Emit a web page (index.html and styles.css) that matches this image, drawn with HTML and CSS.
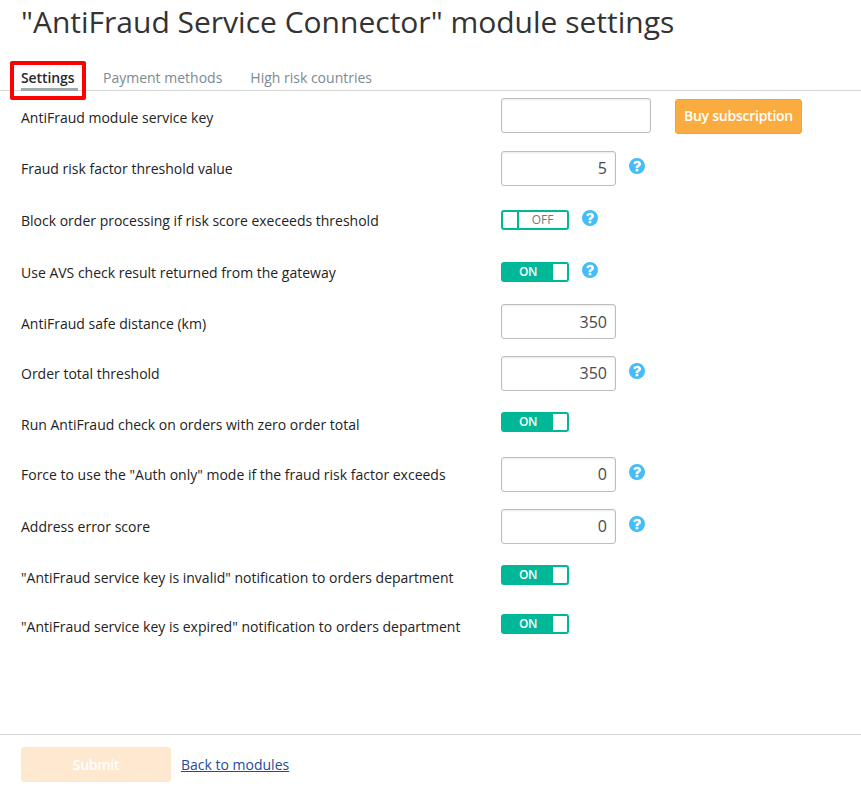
FILE: index.html
```html
<!DOCTYPE html>
<html lang="en">
<head>
<meta charset="utf-8">
<title>"AntiFraud Service Connector" module settings</title>
<link rel="stylesheet" href="styles.css">
</head>
<body>
<svg class="defs" width="0" height="0" aria-hidden="true">
  <symbol id="help" viewBox="0 0 1536 1536">
    <path d="M896 1248v-192q0-14-9-23t-23-9H672q-14 0-23 9t-9 23v192q0 14 9 23t23 9h192q14 0 23-9t9-23zm256-672q0-88-55.500-163T958 297t-170-41q-243 0-371 213-15 24 8 42l132 100q7 6 19 6 16 0 25-12 53-68 86-92 34-24 86-24 48 0 85.500 26t37.500 59q0 38-20 61t-68 45q-63 28-115.500 86.500T640 892v36q0 14 9 23t23 9h192q14 0 23-9t9-23q0-19 21.500-49.500T972 829q32-18 49-28.500t46-35 44.500-48 28-60.500 12.500-81zm384 192q0 209-103 385.500T1153.500 1433 768 1536t-385.500-103T103 1153.500 0 768t103-385.500T382.500 103 768 0t385.500 103T1433 382.500 1536 768z"/>
  </symbol>
</svg>
<h1>"AntiFraud Service Connector" module settings</h1>
<nav class="tabs">
  <a class="tab active">Settings</a>
  <a class="tab">Payment methods</a>
  <a class="tab">High risk countries</a>
</nav>
<form class="settings">
  <div class="row flush">
    <label>AntiFraud module service key</label>
    <input class="field wide" type="text">
    <button class="button buy" type="button">Buy subscription</button>
  </div>
  <div class="row tall">
    <label>Fraud risk factor threshold value</label>
    <input class="field" type="text" value="5">
    <svg class="help"><use href="#help"/></svg>
  </div>
  <div class="row tall">
    <label>Block order processing if risk score execeeds threshold</label>
    <span class="switch off low"><span>OFF</span></span>
    <svg class="help"><use href="#help"/></svg>
  </div>
  <div class="row">
    <label>Use AVS check result returned from the gateway</label>
    <span class="switch on low"><span>ON</span></span>
    <svg class="help"><use href="#help"/></svg>
  </div>
  <div class="row short flush">
    <label>AntiFraud safe distance (km)</label>
    <input class="field" type="text" value="350">
  </div>
  <div class="row">
    <label>Order total threshold</label>
    <input class="field" type="text" value="350">
    <svg class="help"><use href="#help"/></svg>
  </div>
  <div class="row short">
    <label>Run AntiFraud check on orders with zero order total</label>
    <span class="switch on"><span>ON</span></span>
  </div>
  <div class="row tall">
    <label>Force to use the "Auth only" mode if the fraud risk factor exceeds</label>
    <input class="field" type="text" value="0">
    <svg class="help"><use href="#help"/></svg>
  </div>
  <div class="row">
    <label>Address error score</label>
    <input class="field" type="text" value="0">
    <svg class="help"><use href="#help"/></svg>
  </div>
  <div class="row compact">
    <label>"AntiFraud service key is invalid" notification to orders department</label>
    <span class="switch on"><span>ON</span></span>
  </div>
  <div class="row">
    <label>"AntiFraud service key is expired" notification to orders department</label>
    <span class="switch on"><span>ON</span></span>
  </div>
</form>
<footer>
  <button class="button submit" type="button">Submit</button>
  <a class="back">Back to modules</a>
</footer>
</body>
</html>
```
FILE: styles.css
```css
* { box-sizing: border-box; }
body {
  margin: 0;
  height: 797px;
  display: flex;
  flex-direction: column;
  overflow: hidden;
  background: #fff;
  color: #333;
  font: 14px/20px "Open Sans", sans-serif;
}
.defs { position: absolute; }
h1 {
  margin: 0;
  padding-left: 21px;
  height: 61px;
  font-size: 30px;
  font-weight: 400;
  line-height: 44px;
  white-space: nowrap;
}
.tabs {
  display: flex;
  height: 30px;
  padding-left: 10px;
  border-bottom: 1px solid #d4d6d6;
}
.tab {
  height: 29px;
  margin-right: 28px;
  line-height: 34px;
  color: #7c8a91;
}
.tab.active {
  width: 76px;
  height: 39px;
  margin-right: 17px;
  padding: 0 4px 0 7px;
  border: 4px solid #f00;
  border-radius: 2px;
  color: #28282d;
  font-weight: 600;
  line-height: 26px;
  letter-spacing: -0.1px;
}
.tab.active::after {
  content: "";
  display: block;
  width: 57px;
  height: 3px;
  margin-top: -3px;
  background: #9faaad;
}
.settings { flex: 1; padding: 7px 0 0 21px; }
.row { display: flex; align-items: flex-start; height: 51px; }
.row.tall { height: 52px; }
.row.short { height: 50px; }
.row.compact { height: 49px; }
label { width: 480px; line-height: 40px; white-space: nowrap; color: #232323; }
.field {
  width: 115px;
  height: 35px;
  margin: 2px 0 0;
  padding: 0 8px 2px;
  border: 1px solid #bdbdbd;
  border-radius: 3px;
  box-shadow: inset 0 1px 2px rgba(0, 0, 0, .09);
  color: #47494c;
  font: 16px "Open Sans", sans-serif;
  text-align: right;
}
.flush .field { margin-top: 0; padding-bottom: 0; }
.field.wide { width: 150px; }
.help { width: 16px; height: 16px; margin: 9px 0 0 13px; fill: #46bdfb; }
.switch {
  display: flex;
  width: 68px;
  height: 20px;
  margin-top: 7px;
  border: 2px solid #00b897;
  border-radius: 3px;
  font-size: 12px;
  line-height: 16px;
  text-align: center;
}
.switch.low { margin-top: 9px; }
.switch span { width: 50px; }
.switch.on { background: linear-gradient(90deg, #00b897 50px, #fff 50px); color: #fff; font-weight: 600; letter-spacing: -0.5px; }
.switch.off { padding-left: 15px; background: linear-gradient(90deg, #fff 14px, #00b897 14px, #00b897 16px, #fff 16px); color: #777; }
.button {
  height: 35px;
  padding: 0;
  border: 1px solid #f5a623;
  border-radius: 3px;
  background: #fbac40;
  color: #fff;
  font: 600 14px/20px "Open Sans", sans-serif;
  letter-spacing: -0.25px;
}
.buy { width: 127px; margin: 1px 0 0 24px; padding-bottom: 2px; }
footer {
  display: flex;
  gap: 10px;
  height: 63px;
  padding: 12px 21px;
  border-top: 1px solid #d4d6d6;
}
.submit { width: 150px; border-color: #fee8cb; background: #fee8cf; }
.back { color: #1e4b9b; line-height: 36px; text-decoration: underline; }
```
